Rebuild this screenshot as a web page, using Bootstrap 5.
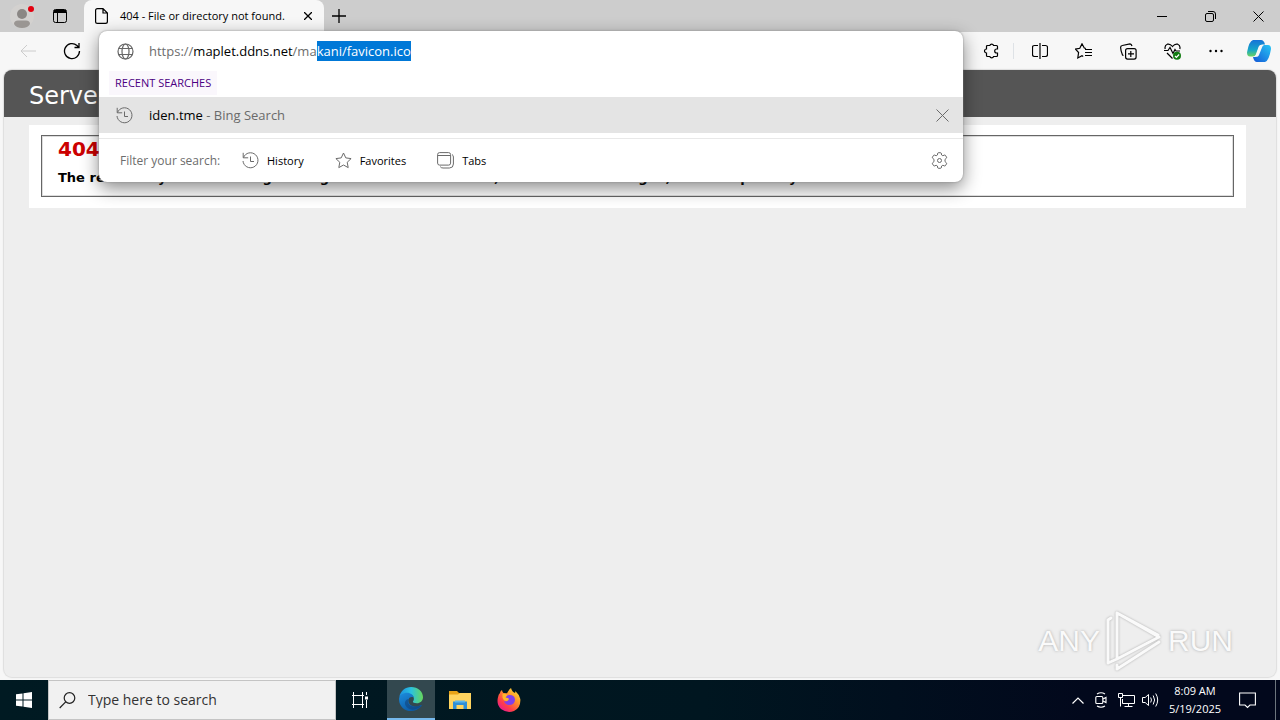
<!DOCTYPE html>
<html lang="en">
<head>
<meta charset="utf-8">
<meta name="viewport" content="width=device-width, initial-scale=1">
<title>404 - File or directory not found.</title>
<link href="https://cdn.jsdelivr.net/npm/bootstrap@5.3.0/dist/css/bootstrap.min.css" rel="stylesheet">
<style>
body{font-family:"Open Sans","Noto Sans",sans-serif;font-size:12px;line-height:16px;color:#000;background:#f7f7f7}
button{border:0;background:none;padding:0;color:inherit;display:flex;align-items:center;justify-content:center}
svg{display:block;flex:none;fill:none;stroke:currentColor}
svg.solid{stroke:none}
.titlebar{height:32px;background:#cdcdcd}
.w-44{width:44px}
.browser-tab{width:240px;height:32px;background:#f7f7f7;border-radius:8px 8px 0 0;padding-left:11px;padding-right:8px;font-size:11px}
.toolbar{height:38px;background:#f7f7f7;padding-left:6px}
.tool{width:44px;height:38px}
.viewport{margin:0 4px 3px;background:#eee;border-radius:8px;overflow:hidden;box-shadow:0 0 1px 1px #ddd}
.site-head{background:#555;color:#fff;height:47px;padding:9px 25px;font:24px/34px "DejaVu Sans",sans-serif;margin:0}
.content-box{margin:8px 30px 0 25px;padding:10px 12px 11px;background:#fff}
.frame{border:1px solid #666;box-shadow:inset 0 0 0 1px #ddd;padding:0 16px;height:62px}
.frame h2{font:bold 20px/26px "DejaVu Sans",sans-serif;color:#c00;margin:0}
.frame h3{font:bold 13px/18px "DejaVu Sans",sans-serif;margin:7px 0 0;white-space:nowrap}
.omnibox{position:absolute;z-index:5;left:99px;right:317px;top:31px;height:151px;background:#fff;border-radius:8px;box-shadow:0 0 2px #888,0 6px 18px #0007}
.address{height:40px;padding-left:18px;color:#666}
.address input{border:0;outline:0;background:transparent;width:100%;height:30px;padding:0}
.url{position:absolute;left:0;top:5px;font-size:13px;line-height:20px;pointer-events:none;white-space:nowrap;color:#6d6d6d}
.url b{font-weight:400;color:#000}
.url mark{padding:0;background:#0078d7;color:#fff;display:inline-block}
.address .url-box{margin-left:15px}
.recent{margin:0 0 2px 10px;padding:0 6px;font-size:11px;line-height:24px;color:#4b0082;background:#faf7fc;align-self:flex-start}
.hit{height:36px;background:#e4e4e4;padding:0 10px 0 17px;font-size:13px}
.filters{margin-top:5px;border-top:1px solid #e8e8e8;height:44px;padding:0 15px 0 21px;font-size:11px}
.prompt-label{color:#6d6d6d;font-size:12px;width:122px}
.filter-gap{margin-left:31px}
.soft{color:#6a6a6a}
.watermark{position:absolute;right:43px;bottom:4px;height:64px;color:#fafafa;font:30px/64px "Liberation Sans",sans-serif;text-shadow:0 0 3px #aaa}
.taskbar{height:40px;background:linear-gradient(90deg,#001a22,#001620 55%,#02081c 85%);color:#fff}
.task{width:48px;height:40px}
.search{width:288px;background:#f1f1f1;border:1px solid #c4c4c4;color:#222;padding-left:10px}
.search input{border:0;outline:0;background:transparent;font-size:14px;padding:0;min-width:0}
.search input::placeholder{color:#333;opacity:1}
.active-task{background:#33484f;border-bottom:2px solid #76b9ed;margin-left:3px}
.apps{gap:1px}
.tray{gap:7px}
.clock{width:58px;font-size:11px;line-height:18px}
.desktop-edge{width:5px;margin-left:12px}
</style>
</head>
<body class="d-flex flex-column vh-100 overflow-hidden position-relative">
<header class="titlebar d-flex align-items-center">
  <button class="w-44 h-100" aria-label="Profile"><svg class="solid" width="28" height="28" viewBox="0 0 28 28"><circle cx="14" cy="14" r="12" fill="#d3d1cf"/><circle cx="14" cy="12" r="5" fill="#8b8784"/><path d="M6 22q0-3.500 4-3.500h8q4 0 4 3.500-2 4-8 4t-8-4" fill="#9a9693"/><circle cx="23" cy="7" r="3" fill="#e3000f"/></svg></button>
  <button class="h-100 px-2" aria-label="Tab actions"><svg width="16" height="16" viewBox="0 0 16 16"><rect x="1.500" y="1.500" width="13" height="13" rx="2"/><path d="M2 3.500h12" stroke-width="3"/><path d="M5.500 4v10"/></svg></button>
  <div class="browser-tab d-flex align-items-center ms-2">
    <svg width="13" height="16" viewBox="0 0 13 16" stroke-width="1.200"><path d="M2.500.6H8l4.400 4.400v8.500q0 1.900-1.900 1.900h-8Q.6 15.400.6 13.500v-11Q.6.6 2.500.6M8 .8V5h4.200"/></svg>
    <span class="flex-grow-1 ps-2 ms-1 text-nowrap">404 - File or directory not found.</span>
    <button class="p-1" aria-label="Close tab"><svg width="8" height="8" viewBox="0 0 8 8" stroke-width="1.300"><path d="m0 0 8 8M8 0 0 8"/></svg></button>
  </div>
  <button class="px-2" aria-label="New tab"><svg width="14" height="14" viewBox="0 0 14 14" stroke-width="1.300"><path d="M7 0v14M0 7h14"/></svg></button>
  <div class="ms-auto d-flex gap-1">
    <button class="w-44" aria-label="Minimize"><svg width="10" height="10" viewBox="0 0 10 10"><path d="M0 5.500h10"/></svg></button>
    <button class="w-44" aria-label="Restore"><svg width="11" height="11" viewBox="0 0 11 11"><rect x=".5" y="2.500" width="8" height="8" rx="1.500"/><path d="M3 .5h5q2.500 0 2.500 2.500v5"/></svg></button>
    <button class="w-44" aria-label="Close"><svg width="11" height="11" viewBox="0 0 11 11"><path d="m.5.5 10 10m0-10-10 10"/></svg></button>
  </div>
</header>
<nav class="toolbar d-flex align-items-center" aria-label="Browser tools">
  <button class="tool" disabled aria-label="Back" style="color:#ccc"><svg width="16" height="14" viewBox="0 0 16 14"><path d="M16 7H1M7 1 1 7l6 6"/></svg></button>
  <button class="tool" aria-label="Refresh"><svg width="18" height="18" viewBox="0 0 18 18" stroke-width="1.300"><path d="M16.500 9A7.500 7.500 0 1 1 14 3.500l1.500 1.600M16 1v4.500h-4.500"/></svg></button>
  <div class="ms-auto d-flex align-items-center">
    <button class="tool" aria-label="Extensions"><svg width="16" height="16" viewBox="0 0 16 16" stroke-width="1.200"><path d="M4.500 2.500h2.300a2 2 0 0 1 3.800 0H13.500q1 0 1 1V6h-.8a2 2 0 0 0 0 4h.8v2.500q0 1-1 1h-2.900a2 2 0 0 1-3.800 0H4.500q-1 0-1-1V10a2 2 0 0 1 0-4V3.500q0-1 1-1"/></svg></button>
    <span class="border-start" style="height:16px"></span>
    <button class="tool ms-1" aria-label="Split screen"><svg width="16" height="16" viewBox="0 0 16 16" stroke-width="1.200"><path d="M6 2.500H2.500q-2 0-2 2v7q0 2 2 2H6M10 2.500h3.500q2 0 2 2v7q0 2-2 2H10M8 0v16"/></svg></button>
    <button class="tool" aria-label="Favorites"><svg width="18" height="17" viewBox="0 0 18 17" stroke-width="1.200"><path d="M11 5.500 9.300 5 7 .8 4.800 5.300l-4.300.8L3.600 9.500l-.8 5.500L7 12.700l1.200.7M10 6.500h7M10 9.500h7M10 12.500h7"/></svg></button>
    <button class="tool" aria-label="Collections"><svg width="17" height="17" viewBox="0 0 17 17" stroke-width="1.200"><rect x="5.600" y="5.600" width="10.500" height="10.500" rx="2"/><path d="M3.500 12.500 2.500 12Q.8 8 .6 4.500q0-1.700 1.700-2L10 .8q1.400 0 2 2.200M10.800 8v6M8 10.800h6"/></svg></button>
    <button class="tool" aria-label="Browser essentials"><svg width="17" height="17" viewBox="0 0 17 17" stroke-width="1.200"><path d="M1.200 6Q.3 2.500 3.300 1.200 6.200.5 8.500 3.500 10.800.5 13.700 1.200 16.700 2.500 15.800 6M0 7.500h4l2-3 3 6 2-4 1 1.500h4M3 10l5.500 5.500"/><circle cx="13" cy="12.800" r="4" fill="#107c10" stroke="none"/><path d="m11 13 1.400 1.400 2.700-2.900" stroke="#fff"/></svg></button>
    <button class="tool" aria-label="Settings and more"><svg class="solid" width="14" height="4" viewBox="0 0 14 4"><g fill="#000"><circle cx="1.500" cy="2" r="1.200"/><circle cx="7" cy="2" r="1.200"/><circle cx="12.500" cy="2" r="1.200"/></g></svg></button>
    <button class="w-44 ps-0" aria-label="Copilot" style="width:42px"><svg class="solid" width="24" height="24" viewBox="0 0 24 24"><defs><linearGradient id="cpa" x2="0" y2="1"><stop stop-color="#1672d8"/><stop offset=".6" stop-color="#16a6c8"/><stop offset="1" stop-color="#6cd35f"/></linearGradient><linearGradient id="cpb" x1="1" x2="0" y2="1"><stop stop-color="#26c6f5"/><stop offset="1" stop-color="#1457d6"/></linearGradient></defs><path d="M6 1h8q3 0 4 4.500h-3q-2 0-3 3l-2.500 6q-1 3-4 3H3q-3 0-3-4Q2 2 6 1" fill="url(#cpa)"/><path d="M18 23h-8q-3 0-4-5h2q2 0 3-3l2.500-6q1-3 4-3H21q3 0 3 4-2 12-6 13" fill="url(#cpb)"/><path d="m11.500 8-3 8.500q-.4 1-1.200 1.300h3q1.300-.3 2-2.500l3-7.500q.4-1.200 1.500-1.800h-3.500q-1.200.3-1.800 2" fill="#f7f7f7"/></svg></button>
  </div>
</nav>
<main class="viewport flex-grow-1 position-relative">
  <h1 class="site-head">Server Error</h1>
  <div class="content-box"><div class="frame">
    <h2>404 - File or directory not found.</h2>
    <h3>The resource you are looking for might have been removed, had its name changed, or is temporarily unavailable.</h3>
  </div></div>
  <div class="watermark d-flex align-items-center gap-1" aria-label="ANY RUN">
    <span>ANY</span>
    <svg width="60" height="62" viewBox="0 0 60 62" stroke-width="3" stroke-linejoin="round" stroke-linecap="round" style="filter:drop-shadow(0 0 1px #aaa)"><path d="M4 53V10l3-2M13 3v46L55 27ZM13 3l41 22M4 53l9-4M13 59l42-27M13 59l0-4"/></svg>
    <span>RUN</span>
  </div>
</main>
<section class="omnibox d-flex flex-column" aria-label="Address suggestions">
  <div class="address d-flex align-items-center">
    <svg width="17" height="17" viewBox="0 0 17 17" stroke-width="1.200"><circle cx="8.500" cy="8.500" r="7.500"/><ellipse cx="8.500" cy="8.500" rx="3.500" ry="7.500"/><path d="M1.700 5.500h13.600M1.700 11.500h13.600"/></svg>
    <div class="url-box position-relative flex-grow-1"><input type="text" aria-label="Address"><div class="url">https://<b>maplet.ddns.net</b>/ma<mark>kani/favicon.ico</mark></div></div>
  </div>
  <div class="recent">RECENT SEARCHES</div>
  <div class="hit d-flex align-items-center">
    <svg class="soft" width="17" height="17" viewBox="0 0 17 17"><path d="M1.500 5.500A7.500 7.500 0 1 1 1 9M1.200.8v5h5M8.500 4.500v5h3.500"/></svg>
    <span class="ms-3">iden.tme <span class="soft">- Bing Search</span></span>
    <button class="ms-auto p-1 soft" aria-label="Remove suggestion"><svg width="13" height="13" viewBox="0 0 13 13"><path d="m.5.5 12 12m0-12-12 12"/></svg></button>
  </div>
  <div class="filters d-flex align-items-center">
    <span class="prompt-label">Filter your search:</span>
    <button class="gap-2"><svg class="soft" width="17" height="17" viewBox="0 0 17 17"><path d="M1.500 5.500A7.500 7.500 0 1 1 1 9M1.200.8v5h5M8.500 4.500v5h3.500"/></svg>History</button>
    <button class="gap-2 filter-gap"><svg class="soft" width="17" height="17" viewBox="0 0 17 17"><path d="m8.500 1 2.300 4.900 5.300.7-3.900 3.700 1 5.300-4.700-2.600-4.700 2.600 1-5.300L.9 6.600l5.300-.7z"/></svg>Favorites</button>
    <button class="gap-2 filter-gap"><svg class="soft" width="17" height="17" viewBox="0 0 17 17"><rect x=".6" y=".6" width="13" height="12.500" rx="2"/><path d="M1 3.500h12.500M15 2.500q1.400.7 1.400 2.500v7q0 4-4 4H6q-2 0-2.800-1.400"/></svg>Tabs</button>
    <button class="ms-auto soft" aria-label="Search settings"><svg width="17" height="17" viewBox="0 0 17 17"><path d="m6.800 1 .5-.3h2.400l.5.300.4 2 1.200.7 2-.7.600.3 1.200 2v.7L14 7.400v2.200l1.600 1.400v.7l-1.200 2-.6.300-2-.7-1.200.7-.4 2-.5.300H7.300l-.5-.3-.4-2-1.200-.7-2 .7-.6-.3-1.200-2V11L3 9.600V7.400L1.400 6v-.7l1.200-2 .6-.3 2 .7L6.400 3z"/><circle cx="8.500" cy="8.500" r="2"/></svg></button>
  </div>
</section>
<footer class="taskbar d-flex align-items-stretch">
  <button class="task" aria-label="Start"><svg class="solid" width="16" height="16" viewBox="0 0 16 16"><path fill="#fff" d="m0 2.300 6.500-.9v6.100H0zM7.500 1.200 16 0v7.500H7.500zM0 8.500h6.500v6.100L0 13.700zM7.500 8.500H16V16l-8.500-1.200z"/></svg></button>
  <label class="search d-flex align-items-center"><svg width="17" height="17" viewBox="0 0 17 17" stroke-width="1.200"><circle cx="10.500" cy="6" r="5.300"/><path d="M6.700 9.800.7 16"/></svg><input class="ms-2 ps-1 flex-grow-1" type="search" placeholder="Type here to search" aria-label="Type here to search"></label>
  <button class="task" aria-label="Task view"><svg width="17" height="16" viewBox="0 0 17 16"><path d="M1.500 0v3.500h9V0M1.500 16v-3.500h9V16M1.500 3.500v9M10.500 3.500v9M14.500 0v3M14.500 8v8M0 3.500h12M0 12.500h12"/><path d="M14.500 4.500v3" stroke-width="3"/></svg></button>
  <div class="apps d-flex">
  <button class="task active-task" aria-label="Microsoft Edge"><svg class="solid" width="24" height="24" viewBox="0 0 24 24"><defs><linearGradient id="eda"><stop stop-color="#1b8fe0"/><stop offset=".5" stop-color="#2bc2df"/><stop offset="1" stop-color="#67d65b"/></linearGradient><linearGradient id="edb" x2=".6" y2="1"><stop stop-color="#1c8dde"/><stop offset="1" stop-color="#0c59a4"/></linearGradient></defs><path fill="url(#eda)" d="M.3 10C1.500 4 6 0 12.200 0 19 0 24 4.800 24 10.300c0 3.700-3 6-6.100 6-3 0-4-.8-4-1.500 0-.6 1-1 1-3C14.900 8.700 12 7 8.500 7 5 7 1 8.500.3 10"/><path fill="url(#edb)" d="M.1 11.500C.5 8 4 5.800 8 5.800c3.500 0 6.700 2.500 6.900 5.200-.8-1.300-4.600-1.500-5.300 1.500C8.500 17 13 20 17 19.500c2.500-.3 4.300-1.300 5-1.500.7-.1.800.4.500.9C20 22 16 24 12 24 5 24-.4 18.500.1 11.500"/><path fill="#123f76" d="M9.600 12C7.500 18 13 21.500 22.500 18.500 18 24 9 24 6.500 18.500 5 15 7 12 9.600 12" opacity=".55"/></svg></button>
  <button class="task" aria-label="File Explorer"><svg class="solid" width="22" height="18" viewBox="0 0 22 18"><path fill="#e8a317" d="M0 0h8l2 2h11v5H0z"/><path fill="#ffd45f" d="M0 3.500h9l2-1.500h11v16H0z"/><path fill="#2e8fd8" d="M4 10.500h14V18h-3.500v-4h-7v4H4z"/><path fill="#5db7eb" d="M6 9.500h10v2H6z"/></svg></button>
  <button class="task" aria-label="Firefox"><svg class="solid" width="24" height="24" viewBox="0 0 24 24"><defs><linearGradient id="ffa" x1="1" x2=".2" y2="1"><stop stop-color="#fff13d"/><stop offset=".4" stop-color="#ff9a2a"/><stop offset=".75" stop-color="#ff3d49"/><stop offset="1" stop-color="#e4169a"/></linearGradient></defs><path fill="url(#ffa)" d="M5 2q.2 2 1.500 3L10 5.200Q11.500 2 14 0q1 4 4 5 .5-1 .3-2 4 3.500 5 8Q24 20 17 23 10 25.500 4 21-.5 17 .8 10 1.500 6 3 5q.2-2 2-3"/><path fill="#8040ec" d="M12 7q6-.2 6 5-.4 5-6 5-4-.3-5-4 2 1 4-.5 1-1.500-1-2L8 9q1.500-2 4-2"/><path fill="#ffb72b" d="M5.500 6Q8 5 10.500 7L8.500 9.500l3 .7q1 2-2 2.800-3 0-4-3.500z"/></svg></button>
  </div>
  <div class="tray ms-auto d-flex align-items-center">
    <button aria-label="Show hidden icons"><svg width="12" height="7" viewBox="0 0 12 7" stroke-width="1.200"><path d="m.5 6.500 5.500-5.500 5.500 5.500"/></svg></button>
    <button class="ps-1" aria-label="Meet now"><svg width="12" height="16" viewBox="0 0 12 16" stroke-width="1.100"><rect x=".8" y="4.500" width="7" height="7" rx="1"/><path d="m8 7 3-1.500v5L8 9M2 2q4-2.500 8 0M2 14q4 2.500 8 0"/></svg></button>
    <button class="ps-1" aria-label="Network"><svg width="17" height="16" viewBox="0 0 17 16"><path d="M5 3.500h11.500v8H4.500V7M10.500 11.500v3M6.500 14.500h8M.5 1.500h4v4h-4zM2.500 5.500v9"/></svg></button>
    <button aria-label="Volume"><svg width="17" height="16" viewBox="0 0 17 16"><path d="M.5 5.500h2.700l3.300-3v11l-3.300-3H.5zM8.700 5.500q1.500 2.500 0 5M11.200 3.500q2.800 4.500 0 9M13.700 1.500q4 6.500 0 13"/></svg></button>
    <button class="clock text-center">8:09 AM<br>5/19/2025</button>
    <button class="ps-2" aria-label="Notifications"><svg width="17" height="17" viewBox="0 0 17 17" stroke-width="1.100"><path d="M.6 1h15.800v12H11l-2.500 2.500L6 13H.6z"/></svg></button>
    <span class="desktop-edge border-start border-secondary align-self-stretch"></span>
  </div>
</footer>
<script src="https://cdn.jsdelivr.net/npm/bootstrap@5.3.0/dist/js/bootstrap.bundle.min.js"></script>
</body>
</html>
